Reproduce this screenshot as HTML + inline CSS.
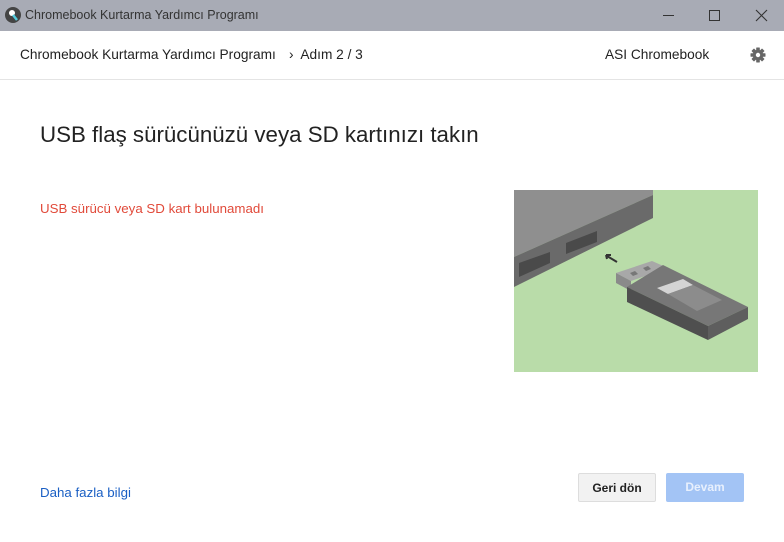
<!DOCTYPE html>
<html><head><meta charset="utf-8"><style>
*{margin:0;padding:0;box-sizing:border-box}
body{width:784px;height:542px;overflow:hidden;background:#fff;font-family:"Liberation Sans",sans-serif;position:relative}
.tb{position:absolute;left:0;top:0;width:784px;height:31px;background:#a8abb5}
.tb .t{position:absolute;left:25px;top:8px;font-size:12.5px;color:#333}
.hd{position:absolute;left:0;top:31px;width:784px;height:49px;border-bottom:1px solid #e4e4e4}
.a{position:absolute;font-size:13.7px;color:#222}
h1{position:absolute;left:40px;top:122px;font-size:22.3px;font-weight:normal;color:#222}
.err{position:absolute;left:40px;top:201px;font-size:13.3px;color:#e14a3a}
.more{position:absolute;left:40px;top:485px;font-size:13.3px;color:#1a5fc4}
.b{position:absolute;top:473px;height:29px;border-radius:2px;font-size:12px;font-weight:bold;text-align:center;line-height:29px}
</style></head><body>
<div class="tb">
<svg style="position:absolute;left:5px;top:7px" width="16" height="16"><circle cx="8" cy="8" r="8" fill="#444"/><circle cx="7" cy="6" r="3" fill="#fff"/><path d="M8 8 L12 13" stroke="#5cd" stroke-width="2.5"/></svg>
<div class="t">Chromebook Kurtarma Yardımcı Programı</div>
<div style="position:absolute;left:663px;top:15px;width:11px;height:1px;background:#333"></div>
<div style="position:absolute;left:709px;top:10px;width:11px;height:11px;border:1px solid #333"></div>
<svg style="position:absolute;left:755px;top:9px" width="13" height="13"><path d="M1 1L12 12M12 1L1 12" stroke="#333" stroke-width="1.1"/></svg>
</div>
<div class="hd">
<div class="a" style="left:20px;top:16px">Chromebook Kurtarma Yardımcı Programı</div>
<div class="a" style="left:289px;top:16px">›&nbsp; Adım 2 / 3</div>
<div class="a" style="left:605px;top:16px">ASI Chromebook</div>
<svg style="position:absolute;left:750px;top:16px" width="16" height="16" viewBox="0 0 16 16"><g fill="#666" transform="translate(8 8)"><rect x="-1.8" y="-7.5" width="3.6" height="15" rx=".5"/><rect x="-1.8" y="-7.5" width="3.6" height="15" rx=".5" transform="rotate(45)"/><rect x="-1.8" y="-7.5" width="3.6" height="15" rx=".5" transform="rotate(90)"/><rect x="-1.8" y="-7.5" width="3.6" height="15" rx=".5" transform="rotate(135)"/><circle r="5.2"/></g><circle cx="8" cy="8" r="2.2" fill="#fff"/></svg>
</div>
<h1>USB flaş sürücünüzü veya SD kartınızı takın</h1>
<div class="err">USB sürücü veya SD kart bulunamadı</div>
<svg style="position:absolute;left:514px;top:190px" width="244" height="182" viewBox="514 190 244 182">
<rect x="514" y="190" width="244" height="182" fill="#b9dca9"/>
<polygon points="514,190 653,190 653,195 514,257" fill="#8f8f8f"/>
<polygon points="514,257 653,195 653,218 514,287" fill="#6a6a6a"/>
<polygon points="519,263 550,252 550,263 519,277" fill="#4a4a4a"/>
<polygon points="566,243 597,231 597,242 566,254" fill="#4a4a4a"/>
<path d="M617 262 L607 256 M606 255 l5 0 M606 255 l1 4" stroke="#333" stroke-width="2" fill="none"/>
<polygon points="616,273 652,261 668,268 631,281" fill="#a8a8a8"/>
<polygon points="616,273 631,281 631,291 616,283" fill="#8a8a8a"/>
<polygon points="630,273 635,271 638,274 633,276" fill="#777"/>
<polygon points="643,268 648,266 651,269 646,271" fill="#777"/>
<polygon points="627,287 663,265 748,307 708,326" fill="#777"/>
<polygon points="627,287 708,326 708,340 627,302" fill="#4f4f4f"/>
<polygon points="708,326 748,307 748,319 708,340" fill="#5e5e5e"/>
<polygon points="657,288 683,279 693,285 668,294" fill="#d4d4d4"/>
<polygon points="668,294 693,285 722,300 697,311" fill="#8c8c8c"/>
</svg>
<div class="more">Daha fazla bilgi</div>
<div class="b" style="left:578px;width:78px;background:#f2f2f2;border:1px solid #ddd;color:#222">Geri dön</div>
<div class="b" style="left:666px;width:78px;background:#a3c4f5;color:#e8f0fd">Devam</div>
</body></html>
